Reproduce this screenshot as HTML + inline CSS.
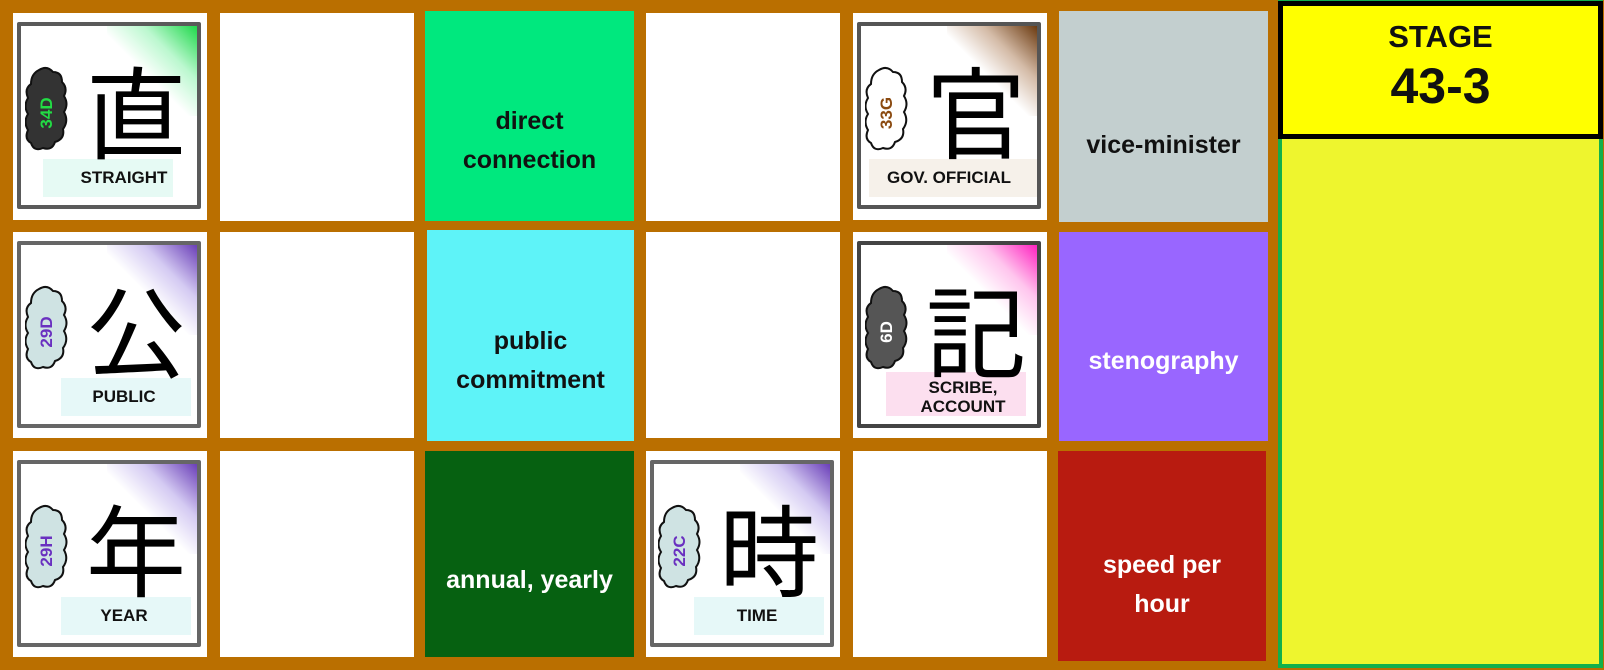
<!DOCTYPE html>
<html><head><meta charset="utf-8"><style>
*{margin:0;padding:0;box-sizing:border-box}
body{width:1604px;height:670px;background:#BA6F00;position:relative;overflow:hidden;font-family:"Liberation Sans","Noto Sans CJK JP",sans-serif}
.c{position:absolute;background:#fff}
.t{position:absolute;display:flex;align-items:center;justify-content:center;text-align:center;font-weight:bold;font-size:25px;line-height:39px}
.card{position:absolute;left:4px;top:9px;width:184px;height:187px;border:4px solid #555;border-radius:2px;background:#fff;overflow:hidden}
.card .g{position:absolute;right:0;top:0;width:90px;height:90px}
.card .band{position:absolute;left:22px;bottom:8px;width:130px;height:38px;opacity:.5}
.card .k{position:absolute;left:60px;top:22px;width:110px;text-align:center;font-size:100px;line-height:120px;font-family:"Noto Sans CJK JP",sans-serif;color:#000}
.card .lab{position:absolute;left:0;right:0;bottom:18px;text-align:center;font-weight:bold;font-size:17px;line-height:19px;color:#111;padding-left:30px}
.card svg.cl{position:absolute;left:4px;top:40px}
.card .num{position:absolute;left:6px;top:76px;width:40px;height:22px;text-align:center;transform:rotate(-90deg);font-size:17px;line-height:22px;font-weight:bold}
</style></head><body>
<!-- row1 -->
<div class="c" style="left:13px;top:13px;width:194px;height:207px">
 <div class="card" style="border-color:#5a5a5a"><div class="g" style="background:linear-gradient(225deg,#1fd84a 0%,rgba(120,240,160,.5) 30%,rgba(255,255,255,0) 55%)"></div>
 <div class="band" style="background:#cdf5ea"></div>
 <svg class="cl" width="44" height="92" viewBox="0 0 44 92"><path d="M14 4 q8-5 14 2 q9 0 9 10 q6 6 2 14 q5 8 0 16 q5 9-1 17 q2 10-8 13 q-3 9-12 6 q-9 4-12-5 q-7-4-3-13 q-5-8 0-16 q-5-8 0-16 q-4-9 3-14 q0-10 8-14z" fill="#333" stroke="#111" stroke-width="2"/></svg>
 <div class="num" style="color:#22dd44">34D</div>
 <div class="k">直</div><div class="lab">STRAIGHT</div></div>
</div>
<div class="c" style="left:220px;top:13px;width:194px;height:208px"></div>
<div class="t" style="left:425px;top:11px;width:209px;height:210px;background:#00E87E;color:#111;padding-top:50px">direct<br>connection</div>
<div class="c" style="left:646px;top:13px;width:194px;height:208px"></div>
<div class="c" style="left:853px;top:13px;width:194px;height:207px">
 <div class="card"><div class="g" style="background:linear-gradient(225deg,#6b3a10 0%,rgba(170,120,80,.5) 30%,rgba(255,255,255,0) 55%)"></div>
 <div class="band" style="background:#eee3d6;left:8px;width:168px"></div>
 <svg class="cl" width="44" height="92" viewBox="0 0 44 92"><path d="M14 4 q8-5 14 2 q9 0 9 10 q6 6 2 14 q5 8 0 16 q5 9-1 17 q2 10-8 13 q-3 9-12 6 q-9 4-12-5 q-7-4-3-13 q-5-8 0-16 q-5-8 0-16 q-4-9 3-14 q0-10 8-14z" fill="#fff" stroke="#111" stroke-width="2"/></svg>
 <div class="num" style="color:#8a4a10">33G</div>
 <div class="k">官</div><div class="lab" style="padding-left:0">GOV. OFFICIAL</div></div>
</div>
<div class="t" style="left:1059px;top:11px;width:209px;height:211px;background:#C3CFCF;color:#111;padding-top:58px">vice-minister</div>
<!-- row2 -->
<div class="c" style="left:13px;top:232px;width:194px;height:206px">
 <div class="card" style="border-color:#666"><div class="g" style="background:linear-gradient(225deg,#6a3fb8 0%,rgba(170,150,230,.5) 30%,rgba(255,255,255,0) 55%)"></div>
 <div class="band" style="background:#cdf2f2;left:40px"></div>
 <svg class="cl" width="44" height="92" viewBox="0 0 44 92"><path d="M14 4 q8-5 14 2 q9 0 9 10 q6 6 2 14 q5 8 0 16 q5 9-1 17 q2 10-8 13 q-3 9-12 6 q-9 4-12-5 q-7-4-3-13 q-5-8 0-16 q-5-8 0-16 q-4-9 3-14 q0-10 8-14z" fill="#cfe3e3" stroke="#111" stroke-width="2"/></svg>
 <div class="num" style="color:#6a30c0">29D</div>
 <div class="k">公</div><div class="lab">PUBLIC</div></div>
</div>
<div class="c" style="left:220px;top:232px;width:194px;height:206px"></div>
<div class="t" style="left:427px;top:230px;width:207px;height:211px;background:#5EF3F8;color:#111;padding-top:50px">public<br>commitment</div>
<div class="c" style="left:646px;top:232px;width:194px;height:206px"></div>
<div class="c" style="left:853px;top:232px;width:194px;height:206px">
 <div class="card" style="border-color:#444"><div class="g" style="background:linear-gradient(225deg,#ff22c0 0%,rgba(255,140,220,.5) 30%,rgba(255,255,255,0) 55%)"></div>
 <div class="band" style="background:#f9bfe0;left:25px;width:140px;height:44px"></div>
 <svg class="cl" width="44" height="92" viewBox="0 0 44 92"><path d="M14 4 q8-5 14 2 q9 0 9 10 q6 6 2 14 q5 8 0 16 q5 9-1 17 q2 10-8 13 q-3 9-12 6 q-9 4-12-5 q-7-4-3-13 q-5-8 0-16 q-5-8 0-16 q-4-9 3-14 q0-10 8-14z" fill="#555" stroke="#111" stroke-width="2"/></svg>
 <div class="num" style="color:#fff">6D</div>
 <div class="k">記</div><div class="lab" style="bottom:8px;padding-left:28px">SCRIBE,<br>ACCOUNT</div></div>
</div>
<div class="t" style="left:1059px;top:232px;width:209px;height:209px;background:#9966FF;color:#fff;padding-top:50px">stenography</div>
<!-- row3 -->
<div class="c" style="left:13px;top:451px;width:194px;height:206px">
 <div class="card" style="border-color:#666"><div class="g" style="background:linear-gradient(225deg,#6a3fb8 0%,rgba(170,150,230,.5) 30%,rgba(255,255,255,0) 55%)"></div>
 <div class="band" style="background:#cdf2f2;left:40px"></div>
 <svg class="cl" width="44" height="92" viewBox="0 0 44 92"><path d="M14 4 q8-5 14 2 q9 0 9 10 q6 6 2 14 q5 8 0 16 q5 9-1 17 q2 10-8 13 q-3 9-12 6 q-9 4-12-5 q-7-4-3-13 q-5-8 0-16 q-5-8 0-16 q-4-9 3-14 q0-10 8-14z" fill="#cfe3e3" stroke="#111" stroke-width="2"/></svg>
 <div class="num" style="color:#6a30c0">29H</div>
 <div class="k">年</div><div class="lab">YEAR</div></div>
</div>
<div class="c" style="left:220px;top:451px;width:194px;height:206px"></div>
<div class="t" style="left:425px;top:451px;width:209px;height:206px;background:#066111;color:#fff;padding-top:52px">annual, yearly</div>
<div class="c" style="left:646px;top:451px;width:194px;height:206px">
 <div class="card" style="border-color:#666"><div class="g" style="background:linear-gradient(225deg,#6a3fb8 0%,rgba(170,150,230,.5) 30%,rgba(255,255,255,0) 55%)"></div>
 <div class="band" style="background:#cdf2f2;left:40px"></div>
 <svg class="cl" width="44" height="92" viewBox="0 0 44 92"><path d="M14 4 q8-5 14 2 q9 0 9 10 q6 6 2 14 q5 8 0 16 q5 9-1 17 q2 10-8 13 q-3 9-12 6 q-9 4-12-5 q-7-4-3-13 q-5-8 0-16 q-5-8 0-16 q-4-9 3-14 q0-10 8-14z" fill="#cfe3e3" stroke="#111" stroke-width="2"/></svg>
 <div class="num" style="color:#6a30c0">22C</div>
 <div class="k">時</div><div class="lab">TIME</div></div>
</div>
<div class="c" style="left:853px;top:451px;width:194px;height:206px"></div>
<div class="t" style="left:1058px;top:451px;width:208px;height:210px;background:#B81B10;color:#fff;padding-top:58px">speed per<br>hour</div>
<!-- right panel -->
<div style="position:absolute;left:1278px;top:0;width:325px;height:668px;background:#EEF52E;border:4px solid #11B04C"></div>
<div style="position:absolute;left:1278px;top:1px;width:325px;height:138px;background:#FFFF00;border:5px solid #000;text-align:center;font-weight:bold;color:#111">
 <div style="font-size:31px;line-height:34px;margin-top:14px">STAGE</div>
 <div style="font-size:50px;line-height:52px;margin-top:6px">43-3</div>
</div>
</body></html>
